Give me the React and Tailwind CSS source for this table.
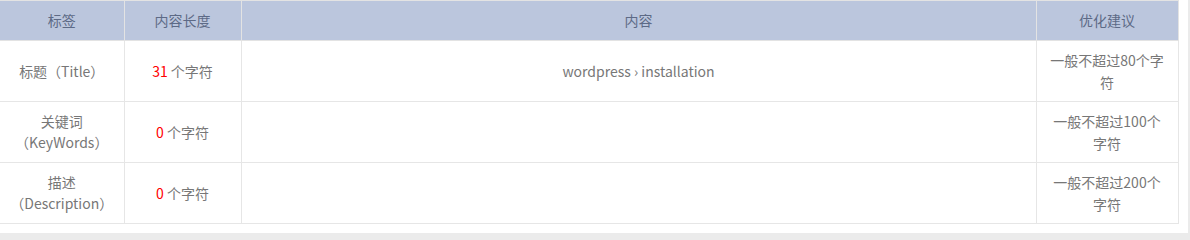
const rows = [
  { label: '标题（Title）', len: 31, content: 'wordpress › installation', tip: '一般不超过80个字符' },
  { label: '关键词（KeyWords）', len: 0, content: '', tip: '一般不超过100个字符' },
  { label: '描述（Description）', len: 0, content: '', tip: '一般不超过200个字符' },
];

export default function App() {
  return (
    <div className="w-[1190px] h-[240px] bg-[#ebebeb] font-['Noto_Sans_CJK_SC',sans-serif] text-[14px]">
      <div className="w-[1188px] h-[233px] bg-white">
        <table className="table-fixed border-collapse w-[1178px] text-center">
          <colgroup>
            <col className="w-[124px]" />
            <col className="w-[117px]" />
            <col className="w-[795px]" />
            <col className="w-[142px]" />
          </colgroup>
          <thead>
            <tr className="bg-[#bbc6dd] text-[#5d6a86]">
              <th className="border border-[#e3e3e3] border-l-0 h-[40px] font-normal">标签</th>
              <th className="border border-[#e3e3e3] font-normal">内容长度</th>
              <th className="border border-[#e3e3e3] font-normal">内容</th>
              <th className="border border-[#e3e3e3] font-normal">优化建议</th>
            </tr>
          </thead>
          <tbody className="text-[#777]">
            {rows.map(r => (
              <tr key={r.label}>
                <td className="border border-[#e6e6e6] border-l-0 h-[61px] px-[10px] leading-[21px]">{r.label}</td>
                <td className="border border-[#e6e6e6] px-[10px]">
                  <span className="text-[#ff0000]">{r.len}</span> 个字符
                </td>
                <td className="border border-[#e6e6e6] px-[10px]">{r.content}</td>
                <td className="border border-[#e6e6e6] px-[10px] leading-[22px]">{r.tip}</td>
              </tr>
            ))}
          </tbody>
        </table>
      </div>
    </div>
  );
}
